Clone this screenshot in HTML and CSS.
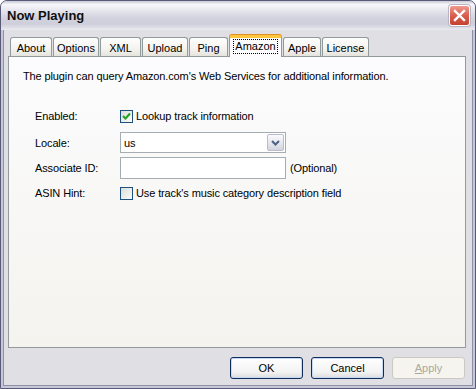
FILE: index.html
```html
<!DOCTYPE html>
<html lang="en">
    <head>
        <meta charset="UTF-8" />
        <title>Now Playing</title>
        <link rel="stylesheet" href="styles.css">
    </head>
    <body>
        <div class="window">
            <div class="titlebar">
                <span class="title">Now Playing</span>
                <span class="close">
                    <svg width="13" height="13" viewBox="0 0 13 13"><path d="M2 2 L11 11 M11 2 L2 11" stroke="#fff" stroke-width="2.4" stroke-linecap="square"/></svg>
                </span>
            </div>
            <div class="client">
                <div class="tabs">
                    <div class="tab tab-about">About</div>
                    <div class="tab tab-options">Options</div>
                    <div class="tab tab-xml">XML</div>
                    <div class="tab tab-upload">Upload</div>
                    <div class="tab tab-ping">Ping</div>
                    <div class="tab tab-amazon active"><span class="focus">Amazon</span></div>
                    <div class="tab tab-apple">Apple</div>
                    <div class="tab tab-license">License</div>
                </div>
                <div class="panel">
                    <p class="intro">The plugin can query Amazon.com's Web Services for additional information.</p>
                    <div class="form">
                        <span class="label">Enabled:</span>
                        <div class="field">
                            <span class="check">
                                <svg width="11" height="11" viewBox="0 0 11 11"><path d="M2 5 L4.5 7.5 L9 2.5" fill="none" stroke="#21a121" stroke-width="2"/></svg>
                            </span>
                            <span>Lookup track information</span>
                        </div>

                        <span class="label">Locale:</span>
                        <div class="field">
                            <div class="select">
                                <span>us</span>
                                <span class="drop">
                                    <svg width="9" height="6" viewBox="0 0 9 6"><path d="M1 1 L4.5 4.5 L8 1" fill="none" stroke="#4d6185" stroke-width="2"/></svg>
                                </span>
                            </div>
                        </div>

                        <span class="label">Associate ID:</span>
                        <div class="field">
                            <div class="input"></div>
                            <span class="hint">(Optional)</span>
                        </div>

                        <span class="label">ASIN Hint:</span>
                        <div class="field">
                            <span class="check"></span>
                            <span>Use track's music category description field</span>
                        </div>
                    </div>
                </div>
                <div class="actions">
                    <button class="btn">OK</button>
                    <button class="btn">Cancel</button>
                    <button class="btn disabled"><u>A</u>pply</button>
                </div>
            </div>
        </div>
    </body>
</html>
```

FILE: styles.css
```css
* {
    margin: 0;
    padding: 0;
    box-sizing: border-box;
}

body {
    font-family: "Liberation Sans", Arial, sans-serif;
    font-size: 11px;
    color: #000;
    background: #fff;
}

.window {
    width: 476px;
    height: 389px;
    border: 1px solid #585a78;
    border-radius: 7px 7px 0 0;
    background: #c8c7d8;
    display: flex;
    flex-direction: column;
    overflow: hidden;
}

.titlebar {
    height: 29px;
    display: flex;
    align-items: center;
    justify-content: space-between;
    padding: 0 5px 0 6px;
    background: linear-gradient(to bottom, #c9c9d6 0%, #f6f6fa 12%, #e4e4ec 35%, #d2d2de 60%, #cfcfdb 80%, #e9e9f0 100%);
}

.title {
    font-size: 13px;
    font-weight: bold;
    color: #111;
}

.close {
    width: 21px;
    height: 21px;
    border: 1px solid #fff;
    border-radius: 3px;
    background: linear-gradient(to bottom, #ef9a8d, #da5e50 50%, #c4402f);
    box-shadow: 0 0 0 1px #b9b4c2;
    display: flex;
    align-items: center;
    justify-content: center;
}

.client {
    flex: 1;
    margin: 0 2px 2px;
    border: 1px solid #8e8fa8;
    border-top: none;
    background: #e0dfe3;
    padding: 5px 6px 6px 4px;
    display: flex;
    flex-direction: column;
}

.tabs {
    height: 21px;
    display: flex;
    align-items: flex-end;
    gap: 1px;
    padding-left: 2px;
}

.tab {
    height: 19px;
    border: 1px solid #919b9c;
    border-bottom: none;
    border-radius: 3px 3px 0 0;
    background: linear-gradient(to bottom, #fefefe, #f4f3ef 60%, #e4e3dc);
    display: flex;
    align-items: center;
    justify-content: center;
    padding-top: 1px;
}

.tab.active {
    height: 22px;
    margin-bottom: -1px;
    position: relative;
    z-index: 1;
    border-top: 3px solid #ffc73c;
    box-shadow: 0 -1px 0 #e68b2c;
    background: #fcfcfe;
    padding-top: 0;
    padding-bottom: 2px;
}

.tab-about { width: 42px; }
.tab-options { width: 46px; }
.tab-xml { width: 41px; }
.tab-upload { width: 46px; }
.tab-ping { width: 39px; }
.tab-amazon { width: 53px; }
.tab-apple { width: 38px; }
.tab-license { width: 47px; }

.focus {
    border: 1px dotted #000;
    padding: 0 1px;
    line-height: 13px;
}

.panel {
    height: 292px;
    border: 1px solid #919b9c;
    background: linear-gradient(to bottom, #fcfcfe, #f4f3ee);
    padding: 12px 14px;
    letter-spacing: -0.12px;
}

.intro {
    line-height: 14px;
}

.form {
    margin: 21px 0 0 12px;
    display: grid;
    grid-template-columns: 85px 1fr;
    grid-template-rows: 24px 21px 22px 20px;
    row-gap: 4px;
    align-items: center;
}

.field {
    display: flex;
    align-items: center;
    gap: 3px;
}

.check {
    width: 13px;
    height: 13px;
    border: 1px solid #1c5180;
    background: linear-gradient(135deg, #dcdcd7, #fbfbf9);
    display: flex;
    align-items: center;
    justify-content: center;
}

.select {
    width: 166px;
    height: 21px;
    border: 1px solid #a5acb2;
    background: #fff;
    display: flex;
    align-items: center;
    justify-content: space-between;
    padding: 1px 1px 1px 3px;
}

.drop {
    width: 17px;
    height: 17px;
    border: 1px solid #b8bccb;
    border-radius: 2px;
    background: linear-gradient(to bottom, #fbfbfd, #d4d4df);
    display: flex;
    align-items: center;
    justify-content: center;
}

.input {
    width: 166px;
    height: 22px;
    border: 1px solid #a5acb2;
    background: #fff;
}

.hint {
    margin-left: 1px;
}

.actions {
    margin-top: 9px;
    display: flex;
    justify-content: flex-end;
    gap: 8px;
    padding-right: 1px;
}

.btn {
    width: 73px;
    height: 22px;
    font-family: inherit;
    font-size: 11px;
    color: #000;
    border: 1px solid #0f2c5c;
    border-radius: 3px;
    background: linear-gradient(to bottom, #ffffff, #f3f3f3 70%, #dcdcdc);
    box-shadow: inset 0 0 0 1px #c6d8f2;
}

.btn.disabled {
    color: #aca899;
    border-color: #cbc9c0;
    background: #f5f4ef;
    box-shadow: none;
}
```
